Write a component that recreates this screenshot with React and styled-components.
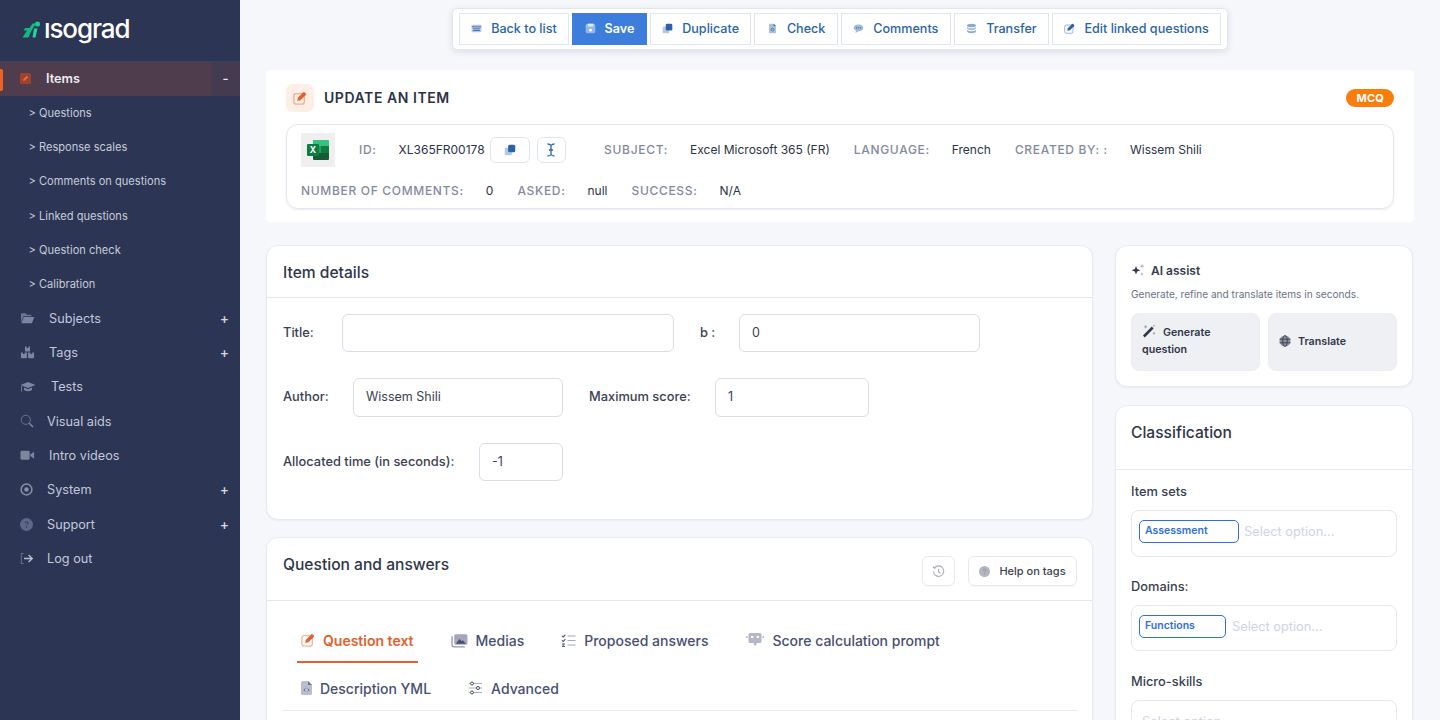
import React from "react";
import styled, { createGlobalStyle } from "styled-components";

const GlobalStyle = createGlobalStyle`
  html, body {
    margin: 0;
    height: 100%;
    overflow: hidden;
    background: #f5f7fb;
    font-family: Inter, "Liberation Sans", sans-serif;
  }
  * { box-sizing: border-box; }
`;

const Layout = styled.div`
  display: flex;
  height: 720px;
  overflow: hidden;
`;

const Sidebar = styled.aside`
  width: 240px;
  flex: none;
  background: #2c3553;
  color: #c3c8db;
`;

const LogoRow = styled.div`
  height: 61px;
  display: flex;
  align-items: center;
  padding: 0 0 2px 22px;
  gap: 3px;
`;

const LogoText = styled.span`
  color: #fff;
  font-size: 26px;
  font-weight: 500;
  letter-spacing: -1.1px;
  line-height: 1;
  margin-top: -1px;
`;

const ActiveRow = styled.div`
  position: relative;
  height: 35px;
  display: flex;
  align-items: center;
  background: #443b50;
  color: #ececf1;
  font-size: 12.7px;
  font-weight: 600;
  border-top: 1px solid #3a4160;
`;

const ActiveBar = styled.span`
  position: absolute;
  left: 0;
  top: 7px;
  width: 3px;
  height: 22px;
  background: #ee6123;
  border-radius: 0 2px 2px 0;
`;

const ActiveMain = styled.div`
  width: 211px;
  height: 100%;
  display: flex;
  align-items: center;
  padding: 0 0 2px 20px;
  background: #4f3c4c;
  gap: 15px;
`;

const ActiveSign = styled.span`
  flex: 1;
  text-align: center;
  font-weight: 500;
  font-size: 13px;
  padding-bottom: 2px;
`;

const SubRow = styled.div`
  height: 34.2px;
  display: flex;
  align-items: center;
  padding-left: 28.5px;
  font-size: 11.1px;
  font-weight: 400;
  color: #c6cbdc;
`;

const NavRow = styled.div`
  height: 34.3px;
  display: flex;
  align-items: center;
  padding: 0 11px 0 20px;
  font-size: 12.7px;
  color: #c3c8db;
`;

const NavIcon = styled.span`
  width: ${(p) => p.$labelAt - 20}px;
  flex: none;
  display: flex;
  align-items: center;
  color: #7e859f;
`;

const NavLabel = styled.span`
  flex: 1;
`;

const NavSign = styled.span`
  font-size: 14px;
  font-weight: 500;
  color: #d5d8e4;
`;

const Main = styled.main`
  flex: 1;
  min-width: 0;
  padding: 8px 26px 0;
`;

const ToolbarWrap = styled.div`
  display: flex;
  justify-content: center;
  height: 62px;
`;

const Toolbar = styled.div`
  height: 42px;
  display: flex;
  gap: 3px;
  padding: 4px 6px;
  background: #fff;
  border: 1px solid #e3e6ee;
  border-radius: 5px;
  box-shadow: 0 2px 6px rgba(40, 50, 80, 0.12);
`;

const ToolButton = styled.div`
  height: 32px;
  display: flex;
  align-items: center;
  gap: 9px;
  padding: 0 11.4px 2px;
  font-size: 12.6px;
  font-weight: ${(p) => (p.$primary ? 600 : 500)};
  color: ${(p) => (p.$primary ? "#fff" : "#2a63a8")};
  background: ${(p) => (p.$primary ? "#3d7ddb" : "#fff")};
  border: 1px solid ${(p) => (p.$primary ? "#3d7ddb" : "#e1e5ed")};
`;

const HeaderCard = styled.section`
  height: 152px;
  background: #fff;
  border-radius: 4px;
  padding: 14px 20px 0;
  margin-bottom: 23px;
`;

const TitleRow = styled.div`
  display: flex;
  align-items: center;
  gap: 10px;
  height: 28px;
  margin-bottom: 12px;
`;

const TitleIcon = styled.span`
  width: 28px;
  height: 28px;
  border-radius: 7px;
  background: #fdeee6;
  display: flex;
  align-items: center;
  justify-content: center;
`;

const PageTitle = styled.h1`
  flex: 1;
  margin: -2px 0 0;
  font-size: 14px;
  font-weight: 600;
  letter-spacing: 0.56px;
  color: #2b3346;
`;

const Badge = styled.span`
  background: #f97d0b;
  color: #fff;
  font-size: 11px;
  font-weight: 700;
  line-height: 18px;
  padding: 0 10px;
  border-radius: 10px;
  letter-spacing: 0.2px;
`;

const MetaBox = styled.div`
  height: 85px;
  border: 1px solid #e4e7ef;
  border-radius: 12px;
  padding: 8px 14px 0;
  box-shadow: 0 1px 2px rgba(40, 50, 80, 0.1);
`;

const MetaRow = styled.div`
  display: flex;
  align-items: center;
  gap: 24px;
  height: ${(p) => p.$h}px;
  margin-top: ${(p) => p.$top || 0}px;
`;

const ExcelBox = styled.span`
  width: 34px;
  height: 34px;
  background: #efefef;
  display: flex;
  align-items: center;
  justify-content: center;
`;

const MetaPair = styled.span`
  display: flex;
  align-items: center;
  gap: 22px;
  padding-bottom: ${(p) => (p.$lift ? 2 : 0)}px;
`;

const MetaLabel = styled.span`
  font-size: 12px;
  font-weight: 500;
  letter-spacing: 0.68px;
  color: #838a9e;
`;

const MetaValue = styled.span`
  font-size: 12px;
  color: #2b3346;
`;

const IdTools = styled.span`
  display: flex;
  gap: 7px;
  margin: 0 14.5px 0 -19px;
`;

const IdButton = styled.span`
  width: ${(p) => p.$w}px;
  height: 26px;
  border: 1px solid #e1e5ed;
  border-radius: 6px;
  display: flex;
  align-items: center;
  justify-content: center;
`;

const Columns = styled.div`
  display: flex;
  gap: 22px;
`;

const LeftColumn = styled.div`
  width: 827px;
  display: flex;
  flex-direction: column;
  gap: 17px;
`;

const RightColumn = styled.div`
  width: 298px;
  display: flex;
  flex-direction: column;
  gap: 18px;
`;

const Card = styled.section`
  background: #fff;
  border: 1px solid #e7eaf1;
  border-radius: 12px;
  box-shadow: 0 1px 2px rgba(40, 50, 80, 0.06);
`;

const CardHead = styled.div`
  height: ${(p) => p.$h}px;
  display: flex;
  align-items: ${(p) => (p.$top ? "flex-start" : "center")};
  justify-content: space-between;
  padding: ${(p) => (p.$top ? "17px 16px 0 15px" : "2px 15px 0 16px")};
  border-bottom: 1px solid #e4e7ef;
`;

const CardTitle = styled.h2`
  margin: ${(p) => (p.$raised ? "-12px 0 0" : "0")};
  font-size: 15.6px;
  font-weight: 500;
  color: #2f3648;
`;

const DetailsBody = styled.div`
  height: 221px;
  padding: 16px 16px 0;
  display: flex;
  flex-direction: column;
  gap: 26px;
`;

const FieldRow = styled.div`
  display: flex;
  align-items: center;
  height: ${(p) => p.$h || 38}px;
`;

const FieldLabel = styled.label`
  font-size: 12.85px;
  font-weight: 500;
  color: #3a4152;
  width: ${(p) => p.$w}px;
  flex: none;
  padding-bottom: 2px;
`;

const Input = styled.input`
  width: ${(p) => p.$w}px;
  height: 100%;
  flex: none;
  border: 1px solid #d9dde6;
  border-radius: 6px;
  padding: 0 12px 2px;
  font: 400 12.5px Inter, "Liberation Sans", sans-serif;
  color: #3a4152;
  background: #fff;
  outline: none;
  margin-right: ${(p) => p.$after || 0}px;
`;

const HeadActions = styled.div`
  display: flex;
  gap: 13px;
  margin-top: 2px;
`;

const GhostButton = styled.span`
  height: 30px;
  width: ${(p) => p.$w}px;
  display: flex;
  align-items: center;
  justify-content: center;
  gap: 9px;
  border: 1px solid #e6e9f1;
  border-radius: 6px;
  font-size: 11px;
  font-weight: 500;
  color: #3a4152;
  box-shadow: 0 1px 1px rgba(40, 50, 80, 0.04);
`;

const QuestionBody = styled.div`
  padding: 22px 15px 0 16px;
  min-height: 240px;
`;

const TabRow = styled.div`
  display: flex;
  height: ${(p) => p.$h}px;
  align-items: flex-start;
  padding-left: 14px;
  gap: ${(p) => p.$gap}px;
`;

const Tab = styled.div`
  display: flex;
  align-items: center;
  gap: ${(p) => p.$gap || 7}px;
  height: 40px;
  padding: 0 4px 4px;
  font-size: 14px;
  font-weight: ${(p) => (p.$active ? 600 : 500)};
  color: ${(p) => (p.$active ? "#e4602c" : "#474f72")};
  border-bottom: 2px solid ${(p) => (p.$active ? "#e4602c" : "transparent")};
`;

const TabDivider = styled.div`
  height: 1px;
  background: #e9ebf1;
`;

const AiCard = styled(Card)`
  height: 142px;
  padding: 16px 15px 0;
`;

const AiTitle = styled.div`
  display: flex;
  align-items: center;
  gap: 6px;
  height: 16px;
  font-size: 12px;
  font-weight: 600;
  color: #353c50;
`;

const AiText = styled.p`
  margin: 9px 0 12px;
  font-size: 10.1px;
  line-height: 14px;
  color: #6b7285;
`;

const AiButtons = styled.div`
  display: grid;
  grid-template-columns: 129px 129px;
  gap: 8px;
`;

const AiButton = styled.div`
  height: 58px;
  background: #eff0f4;
  border: 1px solid #eceef3;
  border-radius: 8px;
  padding: 0 10px 2px;
  font-size: 10.7px;
  font-weight: 600;
  line-height: 17px;
  color: #2f3648;
  display: flex;
  align-items: center;
`;

const AiButtonIcon = styled.span`
  display: inline-block;
  vertical-align: -2px;
  margin-right: 7px;
`;

const ClassCard = styled(Card)`
  height: 400px;
  overflow: hidden;
`;

const ClassBody = styled.div`
  padding: 14px 15px 0;
`;

const ClassLabel = styled.div`
  font-size: 12.85px;
  font-weight: 500;
  color: #383f50;
  line-height: 16px;
  margin-bottom: 10px;
`;

const SelectBox = styled.div`
  height: ${(p) => p.$h}px;
  border: 1px solid #e4e7ef;
  border-radius: 8px;
  padding: 9px 7px 0;
  display: flex;
  align-items: flex-start;
  gap: 5px;
  margin-bottom: ${(p) => p.$after}px;
`;

const Chip = styled.span`
  width: ${(p) => p.$w}px;
  height: 23px;
  border: 1px solid #2f6fd8;
  border-radius: 5px;
  font-size: 10.5px;
  font-weight: 600;
  color: #2f6fd8;
  line-height: 20px;
  padding-left: 5px;
`;

const Placeholder = styled.span`
  font-size: 12.8px;
  line-height: 23px;
  color: #cdd5e3;
  margin-left: ${(p) => p.$ml || 0}px;
`;

const Svg = ({ size = 12, box = 16, children, color = "currentColor" }) => (
  <svg width={size} height={size} viewBox={`0 0 ${box} ${box}`} fill={color} style={{ display: "block", flex: "none" }}>
    {children}
  </svg>
);

const LogoMark = () => (
  <svg width="19" height="17" viewBox="0 0 19 17" style={{ flex: "none" }}>
    <circle cx="15.5" cy="3" r="2.6" fill="#17c98c" />
    <path d="M0.5 16.5 L5 9.5 L1.5 9.5 L3 7 L7.5 7 L10.5 2.5 L14 2.5 L9 10.5 L6.5 16.5 Z" fill="#12b981" />
    <path d="M12 7.5 L15.5 7.5 L13.5 16.5 L10.5 16.5 Z" fill="#1dd79b" />
  </svg>
);

const EditIcon = ({ size = 12, color = "#e4602c" }) => (
  <Svg size={size} color={color}>
    <rect x="1" y="3" width="12" height="12" rx="2.8" fill="none" stroke={color} strokeWidth="1.5" opacity="0.45" />
    <path d="M4.8 11.4 L5.6 7.8 L11.6 1.6 Q12.4 0.8 13.4 1.6 L14.6 2.8 Q15.4 3.8 14.6 4.6 L8.5 10.6 Z" />
  </Svg>
);

const ItemsIcon = () => (
  <svg width="11" height="11" viewBox="0 0 11 11" style={{ display: "block" }}>
    <rect width="11" height="11" rx="1.6" fill="#9b4331" />
    <path d="M3 8 L3.5 6 L6.8 2.8 L8.2 4.2 L5 7.5 Z" fill="#f26a25" />
  </svg>
);

const FolderIcon = () => (
  <Svg size={15}>
    <path d="M1 3.5 Q1 2.5 2 2.5 H6 L7.5 4 H12 V5.5 H4 L1 12 Z" opacity="0.8" />
    <path d="M4.2 6.3 H15.3 L12.6 13 H1.4 Z" />
  </Svg>
);

const TagsIcon = () => (
  <Svg size={15}>
    <path d="M5.3 1.5 H7 V3.2 H9 V1.5 H10.7 V7 H5.3 Z" />
    <path d="M1 8 H3 V9.7 H5 V8 H7.4 V13 Q7.4 14 6.4 14 H2 Q1 14 1 13 Z" />
    <path d="M8.6 8 H11 V9.7 H13 V8 H15 V13 Q15 14 14 14 H9.6 Q8.6 14 8.6 13 Z" />
  </Svg>
);

const CapIcon = () => (
  <Svg size={16}>
    <path d="M8 3 L15.5 6 L8 9 L0.5 6 Z" />
    <path d="M4 8.6 L8 10.2 L12 8.6 V11 Q8 13.4 4 11 Z" />
    <path d="M1.6 7 V12.5" stroke="currentColor" strokeWidth="0.9" fill="none" />
  </Svg>
);

const SearchIcon = () => (
  <svg width="14" height="14" viewBox="0 0 14 14" fill="none" stroke="#6c738e" strokeWidth="1" style={{ display: "block" }}>
    <circle cx="5.8" cy="5.8" r="4.6" />
    <path d="M9.3 9.3 L13 13" strokeWidth="1.6" stroke="#7e859f" />
  </svg>
);

const VideoIcon = () => (
  <Svg size={15}>
    <rect x="0.5" y="3" width="9.8" height="9.5" rx="1.5" />
    <path d="M11 7 L15 4 V11.5 L11 8.6 Z" />
  </Svg>
);

const SystemIcon = () => (
  <svg width="13" height="13" viewBox="0 0 13 13" fill="none" stroke="#8a91aa" style={{ display: "block" }}>
    <circle cx="6.5" cy="6.5" r="5.4" strokeWidth="1.5" />
    <circle cx="6.5" cy="6.5" r="2.2" fill="#8a91aa" stroke="none" />
  </svg>
);

const HelpDot = ({ size = 13, color = "#5f6687", mark = "#2c3553" }) => (
  <svg width={size} height={size} viewBox="0 0 13 13" style={{ display: "block", flex: "none" }}>
    <circle cx="6.5" cy="6.5" r="6.5" fill={color} />
    <path d="M4.9 5.1 Q5 3.7 6.5 3.7 Q8.1 3.7 8.1 5 Q8.1 5.9 7.1 6.4 Q6.5 6.7 6.5 7.5" fill="none" stroke={mark} strokeWidth="0.9" />
    <circle cx="6.5" cy="9.1" r="0.6" fill={mark} />
  </svg>
);

const LogoutIcon = () => (
  <svg width="13" height="13" viewBox="0 0 13 13" fill="none" style={{ display: "block" }}>
    <path d="M3.6 1.5 H1.3 V11.5 H3.6" stroke="#6c738e" strokeWidth="1" />
    <path d="M4 6.5 H12 M8.6 3 L12.2 6.5 L8.6 10" stroke="#b8bdd0" strokeWidth="1.3" />
  </svg>
);

const ListIcon = ({ color }) => (
  <Svg size={11} color={color}>
    <rect x="1" y="2.5" width="14" height="11" rx="1.5" opacity="0.35" />
    <path d="M1 5.2 H15 V6.3 H1 Z M3 8 H13 V9 H3 Z M3 10.5 H13 V11.5 H3 Z" />
  </Svg>
);

const SaveIcon = () => (
  <Svg size={11} color="#fff">
    <rect x="1" y="1" width="14" height="14" rx="2.5" opacity="0.45" />
    <rect x="4" y="1" width="8" height="4" fill="#fff" opacity="0.7" />
    <circle cx="8" cy="10.5" r="2" />
  </Svg>
);

const CopyIcon = ({ color = "#2a63a8", size = 11 }) => (
  <Svg size={size} color={color}>
    <rect x="1" y="5" width="9.5" height="10" rx="1.5" opacity="0.35" />
    <rect x="5.5" y="1" width="9.5" height="10" rx="2" />
  </Svg>
);

const DocIcon = ({ color = "#2a63a8", size = 11 }) => (
  <Svg size={size} color={color}>
    <path d="M3 1 H9.5 L13 4.5 V15 H3 Z" opacity="0.4" />
    <path d="M9.5 1 L13 4.5 H9.5 Z" />
    <circle cx="8" cy="9.5" r="2" fill="none" stroke={color} strokeWidth="1.1" />
  </Svg>
);

const ChatIcon = ({ color }) => (
  <Svg size={11} color={color}>
    <path d="M8 2 C12.2 2 15 4.2 15 7 C15 9.8 12.2 12 8 12 L3.5 14.5 L4.3 11 C2.2 10 1 8.6 1 7 C1 4.2 3.8 2 8 2 Z" opacity="0.45" />
    <circle cx="5.2" cy="7" r="0.9" /><circle cx="8" cy="7" r="0.9" /><circle cx="10.8" cy="7" r="0.9" />
  </Svg>
);

const DbIcon = ({ color }) => (
  <Svg size={11} color={color}>
    <ellipse cx="8" cy="3.5" rx="6.5" ry="2.5" opacity="0.55" />
    <path d="M1.5 5.5 C3 8 13 8 14.5 5.5 V8.5 C13 11 3 11 1.5 8.5 Z" opacity="0.4" />
    <path d="M1.5 10 C3 12.5 13 12.5 14.5 10 V12.5 C13 15.6 3 15.6 1.5 12.5 Z" opacity="0.55" />
  </Svg>
);

const ExcelLogo = () => (
  <svg width="24" height="22" viewBox="0 0 24 22">
    <path d="M7 1 H22 Q23 1 23 2 V7 H7 Z" fill="#33c481" />
    <rect x="7" y="7" width="8" height="7" fill="#21a366" />
    <rect x="15" y="7" width="8" height="7" fill="#107c41" />
    <path d="M7 14 H23 V20 Q23 21 22 21 H8 Q7 21 7 20 Z" fill="#185c37" />
    <rect x="1" y="5" width="12" height="12" rx="1" fill="#107c41" />
    <text x="7" y="14.4" textAnchor="middle" fontSize="8.5" fontWeight="700" fill="#fff" fontFamily="Inter, sans-serif">X</text>
  </svg>
);

const CursorIcon = () => (
  <svg width="10" height="14" viewBox="0 0 10 14" fill="none" stroke="#2a63a8" strokeWidth="1.3" style={{ display: "block" }}>
    <path d="M1.5 1 Q4 1 5 2.5 Q6 1 8.5 1 M5 2.5 V11.5 M1.5 13 Q4 13 5 11.5 Q6 13 8.5 13 M3 7 H7" />
  </svg>
);

const HistoryIcon = () => (
  <svg width="13" height="13" viewBox="0 0 14 14" fill="none" stroke="#a9adb6" strokeWidth="1.2" style={{ display: "block" }}>
    <path d="M2.6 3.2 A5.6 5.6 0 1 1 1.5 7" />
    <path d="M1 1.7 L2.5 3.4 L4.6 3" />
    <path d="M7 4 V7.2 L9 9" />
  </svg>
);

const SparkIcon = () => (
  <svg width="14" height="14" viewBox="0 0 14 14" style={{ display: "block", flex: "none" }}>
    <path d="M5 3 L6.2 6 L9.5 7.3 L6.2 8.6 L5 11.6 L3.8 8.6 L0.5 7.3 L3.8 6 Z" fill="#353c50" />
    <path d="M11 1 L11.6 2.6 L13.2 3.2 L11.6 3.8 L11 5.4 L10.4 3.8 L8.8 3.2 L10.4 2.6 Z" fill="#a9adb8" />
    <path d="M11 9.2 L11.5 10.5 L12.8 11 L11.5 11.5 L11 12.8 L10.5 11.5 L9.2 11 L10.5 10.5 Z" fill="#a9adb8" />
  </svg>
);

const WandIcon = () => (
  <svg width="14" height="14" viewBox="0 0 14 14" style={{ display: "block" }}>
    <path d="M1 11.6 L9.8 2.6 L11.6 4.4 L2.8 13.4 Z" fill="#2f3648" />
    <path d="M3.6 0.8 L4.2 2.2 L5.6 2.8 L4.2 3.4 L3.6 4.8 L3 3.4 L1.6 2.8 L3 2.2 Z M12 7.6 L12.5 8.8 L13.7 9.3 L12.5 9.8 L12 11 L11.5 9.8 L10.3 9.3 L11.5 8.8 Z M12 .4 L12.4 1.4 L13.4 1.8 L12.4 2.2 L12 3.2 L11.6 2.2 L10.6 1.8 L11.6 1.4 Z" fill="#9a9eaa" />
  </svg>
);

const GlobeIcon = () => (
  <svg width="12" height="12" viewBox="0 0 12 12" fill="none" stroke="#3b4152" style={{ display: "block", flex: "none" }}>
    <circle cx="6" cy="6" r="5.5" fill="#8d919c" stroke="none" />
    <ellipse cx="6" cy="6" rx="2.3" ry="5.5" strokeWidth="0.9" />
    <path d="M0.5 4.2 H11.5 M0.5 7.8 H11.5" strokeWidth="0.9" />
  </svg>
);

const MediaIcon = () => (
  <Svg size={17} color="#474f72">
    <path d="M1 4 V12 Q1 14 3 14 H13" fill="none" stroke="#474f72" strokeWidth="1.2" opacity="0.6" />
    <rect x="3" y="2" width="12.5" height="10" rx="1.6" opacity="0.5" />
    <path d="M4.5 11 L8 6.5 L10 8.8 L11 7.8 L14 11 Z" />
  </Svg>
);

const ChecklistIcon = () => (
  <svg width="15" height="15" viewBox="0 0 15 15" fill="none" stroke="#474f72" style={{ display: "block", flex: "none" }}>
    <path d="M6.5 3 H14.5 M6.5 7.5 H14.5 M6.5 12 H14.5" strokeWidth="1.1" opacity="0.5" />
    <path d="M1 2.8 L2.2 4 L4.4 1.6 M1 7.3 L2.2 8.5 L4.4 6.1" strokeWidth="1.1" />
    <path d="M1 11 H3.6 L1.2 13.4 H4" strokeWidth="1" />
  </svg>
);

const BotIcon = () => (
  <svg width="18" height="16" viewBox="0 0 18 16" style={{ display: "block", flex: "none" }}>
    <path d="M4 1 H14 Q15.5 1 15.5 2.5 V9.5 Q15.5 11 14 11 H11 L9 14.5 L7.5 11 H4 Q2.5 11 2.5 9.5 V2.5 Q2.5 1 4 1 Z" fill="#b3b7c7" />
    <rect x="5" y="4" width="2.4" height="2" fill="#fff" /><rect x="10.6" y="4" width="2.4" height="2" fill="#fff" />
    <rect x="0" y="4.5" width="1.6" height="1.2" fill="#8c92aa" /><rect x="16.4" y="4.5" width="1.6" height="1.2" fill="#8c92aa" />
  </svg>
);

const CodeDocIcon = () => (
  <svg width="11" height="14" viewBox="0 0 11 14" style={{ display: "block", flex: "none" }}>
    <path d="M1.5 0 H7 L11 4 V12.5 Q11 14 9.5 14 H1.5 Q0 14 0 12.5 V1.5 Q0 0 1.5 0 Z" fill="#b9bdcf" />
    <path d="M7 0 L11 4 H7 Z" fill="#6c7291" />
    <path d="M4.2 7.6 L2.8 9 L4.2 10.4 M6.8 7.6 L8.2 9 L6.8 10.4" fill="none" stroke="#474f72" strokeWidth="0.8" />
  </svg>
);

const SlidersIcon = () => (
  <svg width="14" height="14" viewBox="0 0 14 14" fill="none" stroke="#474f72" strokeWidth="1" style={{ display: "block", flex: "none" }}>
    <path d="M0.5 2.5 H14 M0.5 7 H14 M0.5 11.5 H14" opacity="0.45" />
    <circle cx="4" cy="2.5" r="1.5" fill="#fff" /><circle cx="10" cy="7" r="1.5" fill="#fff" /><circle cx="4" cy="11.5" r="1.5" fill="#fff" />
  </svg>
);

const subItems = ["Questions", "Response scales", "Comments on questions", "Linked questions", "Question check", "Calibration"];

const navItems = [
  { label: "Subjects", at: 49, icon: <FolderIcon />, sign: "+" },
  { label: "Tags", at: 49, icon: <TagsIcon />, sign: "+" },
  { label: "Tests", at: 51, icon: <CapIcon /> },
  { label: "Visual aids", at: 47, icon: <SearchIcon /> },
  { label: "Intro videos", at: 49, icon: <VideoIcon /> },
  { label: "System", at: 47, icon: <SystemIcon />, sign: "+" },
  { label: "Support", at: 47, icon: <HelpDot />, sign: "+" },
  { label: "Log out", at: 47, icon: <LogoutIcon /> },
];

const BLUE = "#2a63a8";

const tools = [
  { label: "Back to list", icon: <ListIcon color={BLUE} /> },
  { label: "Save", icon: <SaveIcon />, primary: true },
  { label: "Duplicate", icon: <CopyIcon /> },
  { label: "Check", icon: <DocIcon /> },
  { label: "Comments", icon: <ChatIcon color={BLUE} /> },
  { label: "Transfer", icon: <DbIcon color={BLUE} /> },
  { label: "Edit linked questions", icon: <EditIcon size={11} color={BLUE} /> },
];

function App() {
  return (
    <Layout>
      <GlobalStyle />
      <Sidebar>
        <LogoRow>
          <LogoMark />
          <LogoText>ısograd</LogoText>
        </LogoRow>
        <ActiveRow>
          <ActiveBar />
          <ActiveMain>
            <ItemsIcon />
            Items
          </ActiveMain>
          <ActiveSign>-</ActiveSign>
        </ActiveRow>
        {subItems.map((s) => (
          <SubRow key={s}>&gt; {s}</SubRow>
        ))}
        {navItems.map((n) => (
          <NavRow key={n.label}>
            <NavIcon $labelAt={n.at}>{n.icon}</NavIcon>
            <NavLabel>{n.label}</NavLabel>
            {n.sign && <NavSign>{n.sign}</NavSign>}
          </NavRow>
        ))}
      </Sidebar>

      <Main>
        <ToolbarWrap>
          <Toolbar>
            {tools.map((t) => (
              <ToolButton key={t.label} $primary={t.primary}>
                {t.icon}
                {t.label}
              </ToolButton>
            ))}
          </Toolbar>
        </ToolbarWrap>

        <HeaderCard>
          <TitleRow>
            <TitleIcon>
              <EditIcon size={14} />
            </TitleIcon>
            <PageTitle>UPDATE AN ITEM</PageTitle>
            <Badge>MCQ</Badge>
          </TitleRow>
          <MetaBox>
            <MetaRow $h={34}>
              <ExcelBox>
                <ExcelLogo />
              </ExcelBox>
              <MetaPair $lift>
                <MetaLabel>ID:</MetaLabel>
                <MetaValue>XL365FR00178</MetaValue>
              </MetaPair>
              <IdTools>
                <IdButton $w={40}>
                  <CopyIcon size={12} />
                </IdButton>
                <IdButton $w={29}>
                  <CursorIcon />
                </IdButton>
              </IdTools>
              <MetaPair $lift>
                <MetaLabel>SUBJECT:</MetaLabel>
                <MetaValue>Excel Microsoft 365 (FR)</MetaValue>
              </MetaPair>
              <MetaPair $lift>
                <MetaLabel>LANGUAGE:</MetaLabel>
                <MetaValue>French</MetaValue>
              </MetaPair>
              <MetaPair $lift>
                <MetaLabel>CREATED BY: :</MetaLabel>
                <MetaValue>Wissem Shili</MetaValue>
              </MetaPair>
            </MetaRow>
            <MetaRow $h={16} $top={15}>
              <MetaPair>
                <MetaLabel>NUMBER OF COMMENTS:</MetaLabel>
                <MetaValue>0</MetaValue>
              </MetaPair>
              <MetaPair>
                <MetaLabel>ASKED:</MetaLabel>
                <MetaValue>null</MetaValue>
              </MetaPair>
              <MetaPair>
                <MetaLabel>SUCCESS:</MetaLabel>
                <MetaValue>N/A</MetaValue>
              </MetaPair>
            </MetaRow>
          </MetaBox>
        </HeaderCard>

        <Columns>
          <LeftColumn>
            <Card>
              <CardHead $h={52}>
                <CardTitle>Item details</CardTitle>
              </CardHead>
              <DetailsBody>
                <FieldRow>
                  <FieldLabel $w={59}>Title:</FieldLabel>
                  <Input $w={332} $after={26} defaultValue="" />
                  <FieldLabel $w={39}>b :</FieldLabel>
                  <Input $w={241} defaultValue="0" />
                </FieldRow>
                <FieldRow $h={39}>
                  <FieldLabel $w={70}>Author:</FieldLabel>
                  <Input $w={210} $after={26} defaultValue="Wissem Shili" />
                  <FieldLabel $w={126}>Maximum score:</FieldLabel>
                  <Input $w={154} defaultValue="1" />
                </FieldRow>
                <FieldRow>
                  <FieldLabel $w={196}>Allocated time (in seconds):</FieldLabel>
                  <Input $w={84} defaultValue="-1" />
                </FieldRow>
              </DetailsBody>
            </Card>

            <Card>
              <CardHead $h={63}>
                <CardTitle $raised>Question and answers</CardTitle>
                <HeadActions>
                  <GhostButton $w={33}>
                    <HistoryIcon />
                  </GhostButton>
                  <GhostButton $w={109}>
                    <HelpDot size={11} color="#b4b6bd" mark="#85878f" />
                    Help on tags
                  </GhostButton>
                </HeadActions>
              </CardHead>
              <QuestionBody>
                <TabRow $h={48} $gap={29}>
                  <Tab $active $gap={8}>
                    <EditIcon size={14} />
                    Question text
                  </Tab>
                  <Tab $gap={8}>
                    <MediaIcon />
                    Medias
                  </Tab>
                  <Tab $gap={8}>
                    <ChecklistIcon />
                    Proposed answers
                  </Tab>
                  <Tab $gap={9}>
                    <BotIcon />
                    Score calculation prompt
                  </Tab>
                </TabRow>
                <TabRow $h={39} $gap={29}>
                  <Tab $gap={8}>
                    <CodeDocIcon />
                    Description YML
                  </Tab>
                  <Tab $gap={9}>
                    <SlidersIcon />
                    Advanced
                  </Tab>
                </TabRow>
                <TabDivider />
              </QuestionBody>
            </Card>
          </LeftColumn>

          <RightColumn>
            <AiCard>
              <AiTitle>
                <SparkIcon />
                AI assist
              </AiTitle>
              <AiText>Generate, refine and translate items in seconds.</AiText>
              <AiButtons>
                <AiButton>
                  <span>
                    <AiButtonIcon>
                      <WandIcon />
                    </AiButtonIcon>
                    Generate question
                  </span>
                </AiButton>
                <AiButton>
                  <AiButtonIcon>
                    <GlobeIcon />
                  </AiButtonIcon>
                  Translate
                </AiButton>
              </AiButtons>
            </AiCard>

            <ClassCard>
              <CardHead $h={64} $top>
                <CardTitle>Classification</CardTitle>
              </CardHead>
              <ClassBody>
                <ClassLabel>Item sets</ClassLabel>
                <SelectBox $h={47} $after={22}>
                  <Chip $w={100}>Assessment</Chip>
                  <Placeholder>Select option...</Placeholder>
                </SelectBox>
                <ClassLabel>Domains:</ClassLabel>
                <SelectBox $h={46} $after={23}>
                  <Chip $w={87}>Functions</Chip>
                  <Placeholder $ml={1}>Select option...</Placeholder>
                </SelectBox>
                <ClassLabel>Micro-skills</ClassLabel>
                <SelectBox $h={46} $after={0}>
                  <Placeholder $ml={3}>Select option...</Placeholder>
                </SelectBox>
              </ClassBody>
            </ClassCard>
          </RightColumn>
        </Columns>
      </Main>
    </Layout>
  );
}

export default App;
